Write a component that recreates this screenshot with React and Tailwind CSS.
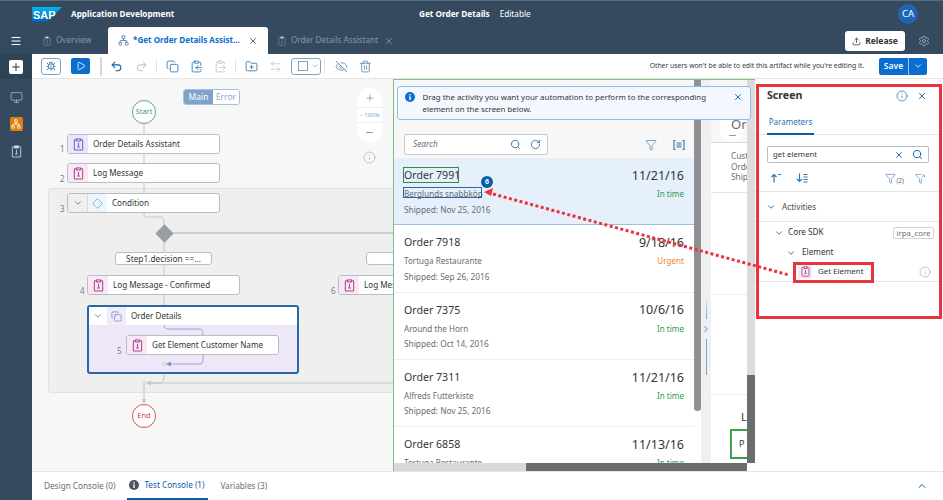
import React from 'react';
import {
  Menu, Plus, Monitor, Bug, Play, Undo2, Redo2, Copy, ClipboardCopy, ClipboardPaste, FolderPlus, ArrowLeftRight,
  ChevronDown, ChevronUp, ChevronRight, EyeOff, Trash2, X, Info, Search, RotateCw, Filter, FilterX, Upload,
  Settings, Diamond, Network,
} from 'lucide-react';

// Clipboard glyph used for every activity
const Clip = ({ size = 13, color = '#a0468f' }) => (
  <svg width={size} height={size} viewBox="0 0 14 14" fill="none" stroke={color} strokeWidth="1.1">
    <rect x="2.500" y="2" width="9" height="11" rx="1" />
    <rect x="5" y="1" width="4" height="2.200" fill="#fff" />
    <path d="M7 5v4M5.500 9.800h3" />
  </svg>
);

const Activity = ({ label, tile = 'bg-[#f9e8f4]', color = '#a0468f', className = '' }) => (
  <div className={`w-[153px] h-[20px] flex bg-white border border-[#b9bdc2] rounded-[3px] overflow-hidden ${className}`}>
    <div className={`w-[20px] flex items-center justify-center ${tile}`}>
      <Clip color={color} />
    </div>
    <div className="pl-[5px] text-[8.100px] leading-[18px] text-[#32363a] whitespace-nowrap">{label}</div>
  </div>
);

const ToolIcon = ({ icon: Icon, color = '#0a5ea8', stroke = 1.600, className = '' }) => (
  <div className={`w-[24px] flex justify-center ${className}`}>
    <Icon size={13} color={color} strokeWidth={stroke} />
  </div>
);

const Divider = () => <div className="w-px h-[14px] bg-[#e2e4e6] mx-[3px]" />;

const StepNo = ({ n, className }) => (
  <span className={`absolute text-[8px] leading-[12px] text-[#7a7d80] ${className}`}>{n}</span>
);

const ORDERS = [
  { id: 'Order 7991', date: '11/21/16', who: 'Berglunds snabbköp', shipped: 'Shipped: Nov 25, 2016', status: 'In time', selected: true },
  { id: 'Order 7918', date: '9/18/16', who: 'Tortuga Restaurante', shipped: 'Shipped: Sep 26, 2016', status: 'Urgent' },
  { id: 'Order 7375', date: '10/6/16', who: 'Around the Horn', shipped: 'Shipped: Oct 14, 2016', status: 'In time' },
  { id: 'Order 7311', date: '11/21/16', who: 'Alfreds Futterkiste', shipped: 'Shipped: Nov 25, 2016', status: 'In time' },
  { id: 'Order 6858', date: '11/13/16', who: 'Tortuga Restaurante', shipped: 'Shipped: Nov 20, 2016', status: 'In time' },
];

const OrderRow = ({ order }) => (
  <div className={`h-[67.300px] shrink-0 relative pl-[10px] pr-[10px] pt-[9px] border-b ${order.selected ? 'bg-[#e5f0fa] border-[#9dbfe0]' : 'bg-white border-[#eeeeee]'}`}>
    <div className="flex justify-between items-center h-[18px]">
      <span className="text-[10.600px] text-[#32363a]">{order.id}</span>
      <span className="text-[12.500px] text-[#32363a]">{order.date}</span>
    </div>
    <div className="flex justify-between items-center h-[15px] mt-[1.500px] text-[8.100px]">
      <span className="text-[#6a6d70]">{order.who}</span>
      <span className={order.status === 'Urgent' ? 'text-[#e9892c]' : 'text-[#2b9a55]'}>{order.status}</span>
    </div>
    <div className="text-[8.300px] text-[#6a6d70] leading-[15px]">{order.shipped}</div>
  </div>
);

const Canvas = () => (
  <div className="w-[361px] relative bg-[#f7f7f7] overflow-hidden">
    {/* condition group */}
    <div className="absolute left-[16px] top-[109px] w-[360px] h-[205px] bg-[#efefef] border border-[#e2e2e2] rounded-[3px]" />

    {/* connectors, coordinates relative to the canvas */}
    <svg className="absolute left-0 top-0" width="361" height="392" fill="none" stroke="#c4c6c8" strokeWidth="1">
      <path d="M112 45V135c0 2 1 3 4 3h12c3 0 4 2 4 5V226" />
      <path d="M141 154H361" strokeWidth="1.500" />
      <path d="M132 295v4c0 3-2 5-5 5H118" />
      <path d="M361 304H118" />
      <path d="M112 304V322" />
      <path d="M119 301.500v5l-5-2.500z" fill="#c4c6c8" stroke="none" />
      <path d="M109.500 320h5l-2.500 5z" fill="#c4c6c8" stroke="none" />
      <circle cx="112" cy="304" r="1.500" fill="#fff" />
    </svg>

    {/* main / error toggle */}
    <div className="absolute left-[151px] top-[10px] w-[57px] h-[16px] flex rounded-[3px] overflow-hidden border border-[#a9c1da] text-[8.500px]">
      <div className="w-[29px] bg-[#7ea3c8] text-white flex items-center justify-center">Main</div>
      <div className="flex-1 bg-white text-[#8ea9c5] flex items-center justify-center">Error</div>
    </div>

    <div className="absolute left-[100px] top-[21px] w-[24px] h-[24px] rounded-full border border-[#57ab7a] bg-white flex items-center justify-center text-[7.500px] text-[#3f9a65]">Start</div>

    <StepNo n="1" className="left-[28px] top-[64px]" />
    <Activity label="Order Details Assistant" tile="bg-[#e8e6f7]" color="#6a5fc4" className="absolute left-[35px] top-[55px]" />
    <StepNo n="2" className="left-[28px] top-[94px]" />
    <Activity label="Log Message" className="absolute left-[35px] top-[84px]" />

    <StepNo n="3" className="left-[28px] top-[124px]" />
    <div className="absolute left-[35px] top-[114px] w-[153px] h-[20px] flex bg-white border border-[#b9bdc2] rounded-[3px] overflow-hidden">
      <div className="w-[20px] bg-[#efefef] border-r border-[#d8d8d8] flex items-center justify-center">
        <ChevronDown size={10} color="#6a6d70" />
      </div>
      <div className="w-[19px] bg-[#eef6fd] flex items-center justify-center">
        <Diamond size={11} color="#2f8fe0" strokeWidth={1.300} />
      </div>
      <div className="pl-[5px] text-[8.100px] leading-[18px] text-[#32363a]">Condition</div>
    </div>

    <div className="absolute left-[123px] top-[145px] w-[18px] h-[18px] flex items-center justify-center">
      <div className="w-[13px] h-[13px] bg-[#9a9ea3] rotate-45" />
    </div>

    <div className="absolute left-[83px] top-[173px] w-[97px] h-[13px] bg-white border border-[#b9bdc2] rounded-[3px] text-[8.300px] leading-[11px] text-center text-[#32363a]">Step1.decision ==...</div>
    <div className="absolute left-[334px] top-[173px] w-[60px] h-[13px] bg-white border border-[#b9bdc2] rounded-[3px]" />

    <StepNo n="4" className="left-[48px] top-[206px]" />
    <Activity label="Log Message - Confirmed" className="absolute left-[55px] top-[196px]" />
    <StepNo n="6" className="left-[299px] top-[206px]" />
    <Activity label="Log Message" className="absolute left-[306px] top-[196px]" />

    {/* loop container */}
    <div className="absolute left-[55px] top-[226px] w-[212px] h-[69px] border-2 border-[#2a67a8] rounded-[3px] bg-[#ede7f7] overflow-hidden">
      <div className="h-[18px] bg-white flex">
        <div className="w-[18px] flex items-center justify-center"><ChevronDown size={10} color="#6a6d70" /></div>
        <div className="w-[19px] bg-[#eeedf9] flex items-center justify-center"><Copy size={11} color="#6a5fc4" strokeWidth={1.300} /></div>
        <div className="pl-[5px] text-[8.100px] leading-[18px] text-[#32363a]">Order Details</div>
      </div>
    </div>
    <svg className="absolute left-0 top-0" width="361" height="392" fill="none" stroke="#a79ddb" strokeWidth="1">
      <path d="M132 246c0 2 1 4 5 4h30c3 0 4 2 4 6" />
      <path d="M171 276v5c0 3-1 4-4 4h-29" />
      <path d="M139 282.500v5l-5-2.500z" fill="#8f83d6" stroke="none" />
      <circle cx="132" cy="285" r="1.500" fill="#fff" stroke="#c4c6c8" />
    </svg>
    <StepNo n="5" className="left-[85px] top-[266px]" />
    <Activity label="Get Element Customer Name" className="absolute left-[94px] top-[256px] border-[#b4adcf]" />

    <div className="absolute left-[100px] top-[325px] w-[24px] h-[24px] rounded-full border border-[#d9534f] bg-white flex items-center justify-center text-[7.500px] text-[#c8413c]">End</div>

    {/* zoom control */}
    <div className="absolute left-[325px] top-[9px] w-[25px] h-[55px] bg-white rounded-full flex flex-col items-center justify-between py-[5px] text-[#7d9fc3]">
      <Plus size={10} color="#7d9fc3" />
      <div className="text-[6px] w-full flex items-center justify-center border-y border-[#eeeeee] leading-[14px]">
        <ChevronDown size={5} color="#7d9fc3" />100%
      </div>
      <div className="w-[7px] h-px bg-[#7d9fc3] my-[5px]" />
    </div>
    <Info size={13} color="#9a9ea3" strokeWidth={1} className="absolute left-[331px] top-[72px]" />
  </div>
);

const Preview = () => (
  <div className="w-[362px] relative flex flex-col border-t border-l border-[#7cc182]">
    <div className="flex-1 flex min-h-0 overflow-hidden">
      {/* order list */}
      <div className="w-[300px] flex flex-col overflow-hidden bg-[#f7f7f7]">
        <div className="h-[78px] shrink-0 relative">
          <div className="absolute left-[10px] top-[54px] w-[144px] h-[21px] bg-white border border-[#c8cacc] rounded-[2px] flex items-center pl-[8px] pr-[3px]">
            <span className="italic text-[8.300px] text-[#6a6d70] flex-1">Search</span>
            <Search size={11} color="#3276b1" className="mr-[9px]" />
            <RotateCw size={11} color="#3276b1" className="mr-[3px]" />
          </div>
          <Filter size={12} color="#3276b1" strokeWidth={1.300} className="absolute left-[251px] top-[59px]" />
          <svg width="12" height="12" viewBox="0 0 12 12" fill="none" stroke="#3276b1" strokeWidth="1.100" className="absolute left-[279px] top-[59px]">
            <path d="M2.500 1.500H1V10.500H2.500M9.500 1.500H11V10.500H9.500" />
            <path d="M3.500 4H8.500M3.500 6H8.500M3.500 8H8.500" />
          </svg>
        </div>
        {ORDERS.map((o) => <OrderRow key={o.id} order={o} />)}
      </div>
      {/* list scrollbar */}
      <div className="w-[7px] bg-white">
        <div className="h-[331px] bg-[#8f9194] rounded-b-[3px]" />
      </div>
      {/* splitter */}
      <div className="w-[10px] bg-[#eef0f1] flex flex-col items-center justify-end pb-[88px]">
        <div className="w-px h-[24px] bg-gradient-to-b from-transparent to-[#7ea3c8]" />
        <ChevronRight size={10} color="#3276b1" className="my-[5px]" />
        <div className="w-px h-[36px] bg-[#7ea3c8]" />
      </div>
      {/* detail page peeking out */}
      <div className="flex-1 bg-white overflow-hidden">
        <div className="h-[63px] bg-[#f7f7f7] border-b border-[#d9d9d9] relative overflow-hidden">
          <div className="absolute left-[9px] top-[35px] w-[24px] h-[27px] bg-white/90 rounded-b-full flex justify-center items-end pb-[6px]">
            <div className="w-[7px] h-px bg-[#7d9fc3]" />
          </div>
          <div className="absolute left-[20px] top-[35px] text-[13px] leading-[18px] text-[#6a6d70]">Order</div>
        </div>
        <div className="h-[50px] pl-[20px] pt-[8px] text-[8.300px] leading-[10.500px] text-[#6a6d70] border-b border-[#e5e5e5]">
          <div>Customer</div><div>Order</div><div>Shipped</div>
        </div>
        <div className="h-[102px] border-b border-[#eeeeee]" />
        <div className="h-[100px] border-b border-[#eeeeee]" />
        <div className="pl-[30px] pt-[14px] text-[11px] text-[#32363a]">L</div>
        <div className="ml-[19px] mt-[3px] h-[30px] border-2 border-r-0 border-[#3ca24a] pl-[7px] text-[9px] leading-[26px] text-[#32363a]">P</div>
      </div>
      {/* page scrollbar */}
      <div className="w-[8px] bg-[#dcdcdc] flex flex-col justify-end">
        <div className="h-[88px] bg-[#6a6d70]" />
      </div>
    </div>
    <div className="h-[8px] flex bg-white shrink-0">
      <div className="w-[132px] bg-[#d9d9d9]" />
      <div className="w-[221px] bg-[#6a6d70]" />
    </div>

    {/* info strip over the page */}
    <div className="absolute left-[3px] top-[6px] w-[354px] h-[34px] bg-[#f2f8fd] border border-[#8fbde6] rounded-[3px] flex pl-[7px] pr-[7px] pt-[4px]">
      <svg width="10" height="10" viewBox="0 0 10 10" className="mt-[1px] shrink-0">
        <circle cx="5" cy="5" r="5" fill="#0a6ed1" />
        <rect x="4.300" y="4.200" width="1.400" height="3.800" fill="#fff" />
        <rect x="4.300" y="2" width="1.400" height="1.400" fill="#fff" />
      </svg>
      <div className="ml-[7.500px] flex-1 text-[7.900px] leading-[12px] text-[#32363a]">
        Drag the activity you want your automation to perform to the corresponding<br />element on the screen below.
      </div>
      <X size={10} color="#0a5ea8" strokeWidth={2} className="mt-[1px]" />
    </div>
  </div>
);

const ScreenPanel = () => (
  <div className="flex-1 bg-white pl-[12px] pr-[13px] pt-[10px] text-[#32363a]">
    <div className="flex items-center h-[14px]">
      <span className="font-bold text-[10.600px] flex-1">Screen</span>
      <Info size={12} color="#0a5ea8" strokeWidth={1.300} className="mr-[9px]" />
      <X size={10} color="#0a5ea8" strokeWidth={2.200} className="mr-[3px]" />
    </div>
    <div className="h-[25px] mt-[7px] border-b border-[#e5e5e5] -mx-[12px] px-[12px]">
      <div className="w-[47px] h-[25px] border-b-2 border-[#0a5ea8] text-[8px] text-[#2a6fb5] text-center leading-[24px]">Parameters</div>
    </div>
    <div className="mt-[11px] mr-[1px] h-[17px] border border-[#b9bdc2] rounded-[2px] flex items-center px-[5px]">
      <span className="flex-1 text-[7.800px]">get element</span>
      <X size={10} color="#0a5ea8" strokeWidth={2} className="mr-[8px]" />
      <Search size={11} color="#0a5ea8" />
    </div>
    <div className="h-[29px] pt-[2px] flex items-center border-b border-[#e5e5e5] -mx-[12px] pl-[15px] pr-[16px]">
      <svg width="12" height="12" viewBox="0 0 12 12" fill="none" stroke="#3276b1" strokeWidth="1.200" className="mr-[14px]">
        <path d="M4 10.500V2.500M1.500 5L4 2.500 6.500 5M8 2.500H11" />
      </svg>
      <svg width="12" height="12" viewBox="0 0 12 12" fill="none" stroke="#3276b1" strokeWidth="1.100">
        <path d="M3.500 1.500V9.500M1 7L3.500 9.500 6 7M7.500 2.500H11.500M7.500 5H11.500M7.500 7.500H11.500M7.500 10H11.500" />
      </svg>
      <div className="flex-1" />
      <Filter size={11} color="#3276b1" strokeWidth={1.300} />
      <span className="text-[6.500px] text-[#6a6d70] mt-[5px] mr-[11px]">(2)</span>
      <FilterX size={11} color="#3276b1" strokeWidth={1.300} />
    </div>
    <div className="h-[30px] pt-[1px] flex items-center border-b border-[#e5e5e5] -mx-[12px] pl-[11px]">
      <ChevronDown size={10} color="#0a5ea8" strokeWidth={2} />
      <span className="ml-[6px] text-[8.200px] text-[#4a4d50]">Activities</span>
    </div>
    <div className="h-[21px] flex items-center -mx-[12px] pl-[19px] pr-[8px]">
      <ChevronDown size={10} color="#32363a" strokeWidth={1.800} />
      <span className="ml-[4px] flex-1 text-[8.200px]">Core SDK</span>
      <span className="border border-[#d0d2d4] rounded-[2px] h-[12px] w-[41px] text-center text-[7.800px] leading-[10px] text-[#6a6d70]">irpa_core</span>
    </div>
    <div className="h-[19px] flex items-center -mx-[12px] pl-[31px]">
      <ChevronDown size={10} color="#32363a" strokeWidth={1.800} />
      <span className="ml-[6px] text-[8.200px]">Element</span>
    </div>
    <div className="h-[20px] flex items-center border-b border-[#e5e5e5] -mx-[12px] pl-[43px] pr-[11px]">
      <div className="w-[14px] h-[14px] bg-[#f9e8f4] rounded-[2px] flex items-center justify-center"><Clip size={11} /></div>
      <span className="ml-[6px] flex-1 text-[7.900px]">Get Element</span>
      <Info size={12} color="#8a8d90" strokeWidth={1} />
    </div>
  </div>
);

const App = () => (
  <div className="w-[943px] h-[500px] relative overflow-hidden flex flex-col bg-white font-['Noto_Sans',sans-serif]">
    {/* shell bar */}
    <div className="h-[54px] shrink-0 bg-[#354a5f] border-t border-[#5a6b7c]">
      <div className="h-[26px] flex items-center pl-[32px] pr-[25px] text-white text-[8.200px]">
        <svg width="30" height="15" viewBox="0 0 30 15" className="shrink-0">
          <defs>
            <linearGradient id="sapBlue" x1="0" y1="0" x2="0" y2="1">
              <stop offset="0" stopColor="#00b8f1" />
              <stop offset="1" stopColor="#0a5cb0" />
            </linearGradient>
          </defs>
          <polygon points="0,0 30,0 15,15 0,15" fill="url(#sapBlue)" />
          <text x="1" y="11.500" fill="#fff" fontSize="11" fontWeight="700" fontFamily="Liberation Sans">SAP</text>
        </svg>
        <span className="ml-[9px] font-bold w-[348px]">Application Development</span>
        <span className="font-bold">Get Order Details</span>
        <span className="ml-[10px] flex-1">Editable</span>
        <div className="w-[20px] h-[20px] rounded-full bg-[#1c66b4] flex items-center justify-center text-[9.500px]">CA</div>
      </div>
      <div className="h-[27px] flex items-end text-[8.100px] text-[#8696a6]">
        <div className="w-[32px] h-[27px] flex items-center justify-center">
          <Menu size={12} color="#fff" />
        </div>
        <div className="w-[76px] h-[27px] flex items-center pl-[10px]">
          <Clip size={10} color="#6f8193" />
          <span className="ml-[4px]">Overview</span>
        </div>
        <div className="w-[160px] h-[27px] bg-white rounded-t-[3px] flex items-center pl-[10px] pr-[10px] text-[#0a6ed1] font-bold">
          <Network size={11} color="#5f88b3" />
          <span className="ml-[4px] flex-1 whitespace-nowrap">*Get Order Details Assist...</span>
          <X size={10} color="#4a4d50" />
        </div>
        <div className="h-[27px] flex items-center pl-[9px]">
          <Clip size={10} color="#6f8193" />
          <span className="ml-[4px] whitespace-nowrap">Order Details Assistant</span>
          <X size={10} color="#8696a6" className="ml-[6px]" />
        </div>
        <div className="flex-1" />
        <div className="h-[20px] w-[60px] mb-[3px] bg-white rounded-[3px] flex items-center justify-center text-[#32363a] font-bold text-[8.500px]">
          <Upload size={9} color="#32363a" className="mr-[4px]" />Release
        </div>
        <div className="w-[38px] h-[27px] flex items-center justify-center">
          <Settings size={12} color="#b7c2cc" strokeWidth={1.300} />
        </div>
      </div>
    </div>

    <div className="flex-1 flex min-h-0">
      {/* side navigation */}
      <div className="w-[32px] shrink-0 bg-[#354a5f] flex flex-col items-center">
        <div className="h-[25px] w-full flex items-center justify-center bg-[#2f4356]">
          <div className="w-[14px] h-[14px] bg-white rounded-[2px] flex items-center justify-center">
            <Plus size={12} color="#32363a" strokeWidth={2} />
          </div>
        </div>
        <Monitor size={13} color="#b7c2cc" strokeWidth={1.300} className="mt-[12px]" />
        <div className="mt-[13px] w-[13px] h-[14px] bg-[#e0800f] rounded-[2px] flex items-center justify-center">
          <Network size={10} color="#fff" />
        </div>
        <div className="mt-[14px]"><Clip size={13} color="#b7c2cc" /></div>
      </div>

      <div className="flex-1 flex flex-col min-w-0">
        {/* toolbar */}
        <div className="h-[25px] shrink-0 flex items-center border-b border-[#e5e5e5] pl-[9px] pr-[16px] bg-white">
          <div className="w-[20px] h-[17px] border border-[#7ea3c8] rounded-[3px] flex items-center justify-center">
            <Bug size={10} color="#3276b1" />
          </div>
          <div className="ml-[10px] w-[19px] h-[16px] bg-[#0a6ed1] rounded-[2px] flex items-center justify-center">
            <Play size={10} color="#fff" />
          </div>
          <div className="ml-[10px] w-[2px] h-[19px] bg-[#d5d7d9]" />
          <ToolIcon icon={Undo2} stroke={1.900} className="ml-[2px]" />
          <ToolIcon icon={Redo2} color="#9ab8d6" className="ml-[1px]" />
          <Divider />
          <ToolIcon icon={Copy} color="#3276b1" />
          <ToolIcon icon={ClipboardCopy} color="#3276b1" />
          <ToolIcon icon={ClipboardPaste} color="#b4c9df" />
          <Divider />
          <ToolIcon icon={FolderPlus} color="#3276b1" />
          <ToolIcon icon={ArrowLeftRight} color="#b4c9df" />
          <div className="ml-[4px] w-[30px] h-[17px] border border-[#7ea3c8] rounded-[3px] flex items-center pl-[6px] gap-[3px]">
            <div className="w-[10px] h-[10px] border border-[#7ea3c8]" />
            <ChevronDown size={8} color="#7ea3c8" />
          </div>
          <Divider />
          <ToolIcon icon={EyeOff} color="#5f88b3" className="ml-[1px]" />
          <ToolIcon icon={Trash2} color="#5f88b3" />
          <span className="flex-1 text-right text-[6.800px] text-[#32363a] mr-[15px]">Other users won't be able to edit this artifact while you're editing it.</span>
          <div className="w-[48px] h-[17px] rounded-[2px] overflow-hidden flex bg-[#0a6ed1] text-white text-[8.500px]">
            <div className="w-[30px] flex items-center justify-center border-r border-white/60 font-semibold">Save</div>
            <div className="flex-1 flex items-center justify-center"><ChevronDown size={10} color="#fff" /></div>
          </div>
        </div>

        <div className="flex-1 flex min-h-0">
          <Canvas />
          <Preview />
          <ScreenPanel />
        </div>

        {/* console tabs */}
        <div className="h-[29px] shrink-0 flex items-center border-t border-[#e5e5e5] bg-white text-[8.200px] text-[#6a6d70] pl-[12px] pr-[15px]">
          <span className="whitespace-nowrap">Design Console (0)</span>
          <div className="ml-[12px] h-full flex items-center border-b-2 border-[#0a5ea8] w-[81px] text-[#0a5ea8] whitespace-nowrap">
            <svg width="10" height="10" viewBox="0 0 10 10" className="ml-[2px] mr-[5px] shrink-0">
              <circle cx="5" cy="5" r="5" fill="#4a5560" />
              <rect x="4.300" y="4.200" width="1.400" height="3.800" fill="#fff" />
              <rect x="4.300" y="2" width="1.400" height="1.400" fill="#fff" />
            </svg>
            Test Console (1)
          </div>
          <span className="ml-[12px] flex-1">Variables (3)</span>
          <ChevronUp size={12} color="#0a5ea8" />
        </div>
      </div>
    </div>

    {/* annotations drawn on top of the screenshot */}
    <div className="absolute left-[403px] top-[167px] w-[56px] h-[16px] border border-[#2f8f3f]" />
    <div className="absolute left-[403px] top-[187px] w-[79px] h-[11px] border border-[#2a67a8]" />
    <div className="absolute left-[481px] top-[176px] w-[12px] h-[12px] rounded-full bg-[#0a5ea8] text-white text-[7px] font-bold flex items-center justify-center">6</div>
    <div className="absolute left-[756px] top-[84px] w-[186px] h-[235px] border-[3px] border-[#e8343c]" />
    <div className="absolute left-[793px] top-[262px] w-[81px] h-[21px] border-[3px] border-[#e8343c]" />
    <svg className="absolute left-0 top-0 pointer-events-none" width="943" height="500" fill="none">
      <path d="M493 194L789 275" stroke="#e8343c" strokeWidth="3" strokeDasharray="3 2.500" />
      <path d="M484 192l9-4 -2 8z" fill="#e8343c" />
    </svg>
  </div>
);

export default App;
